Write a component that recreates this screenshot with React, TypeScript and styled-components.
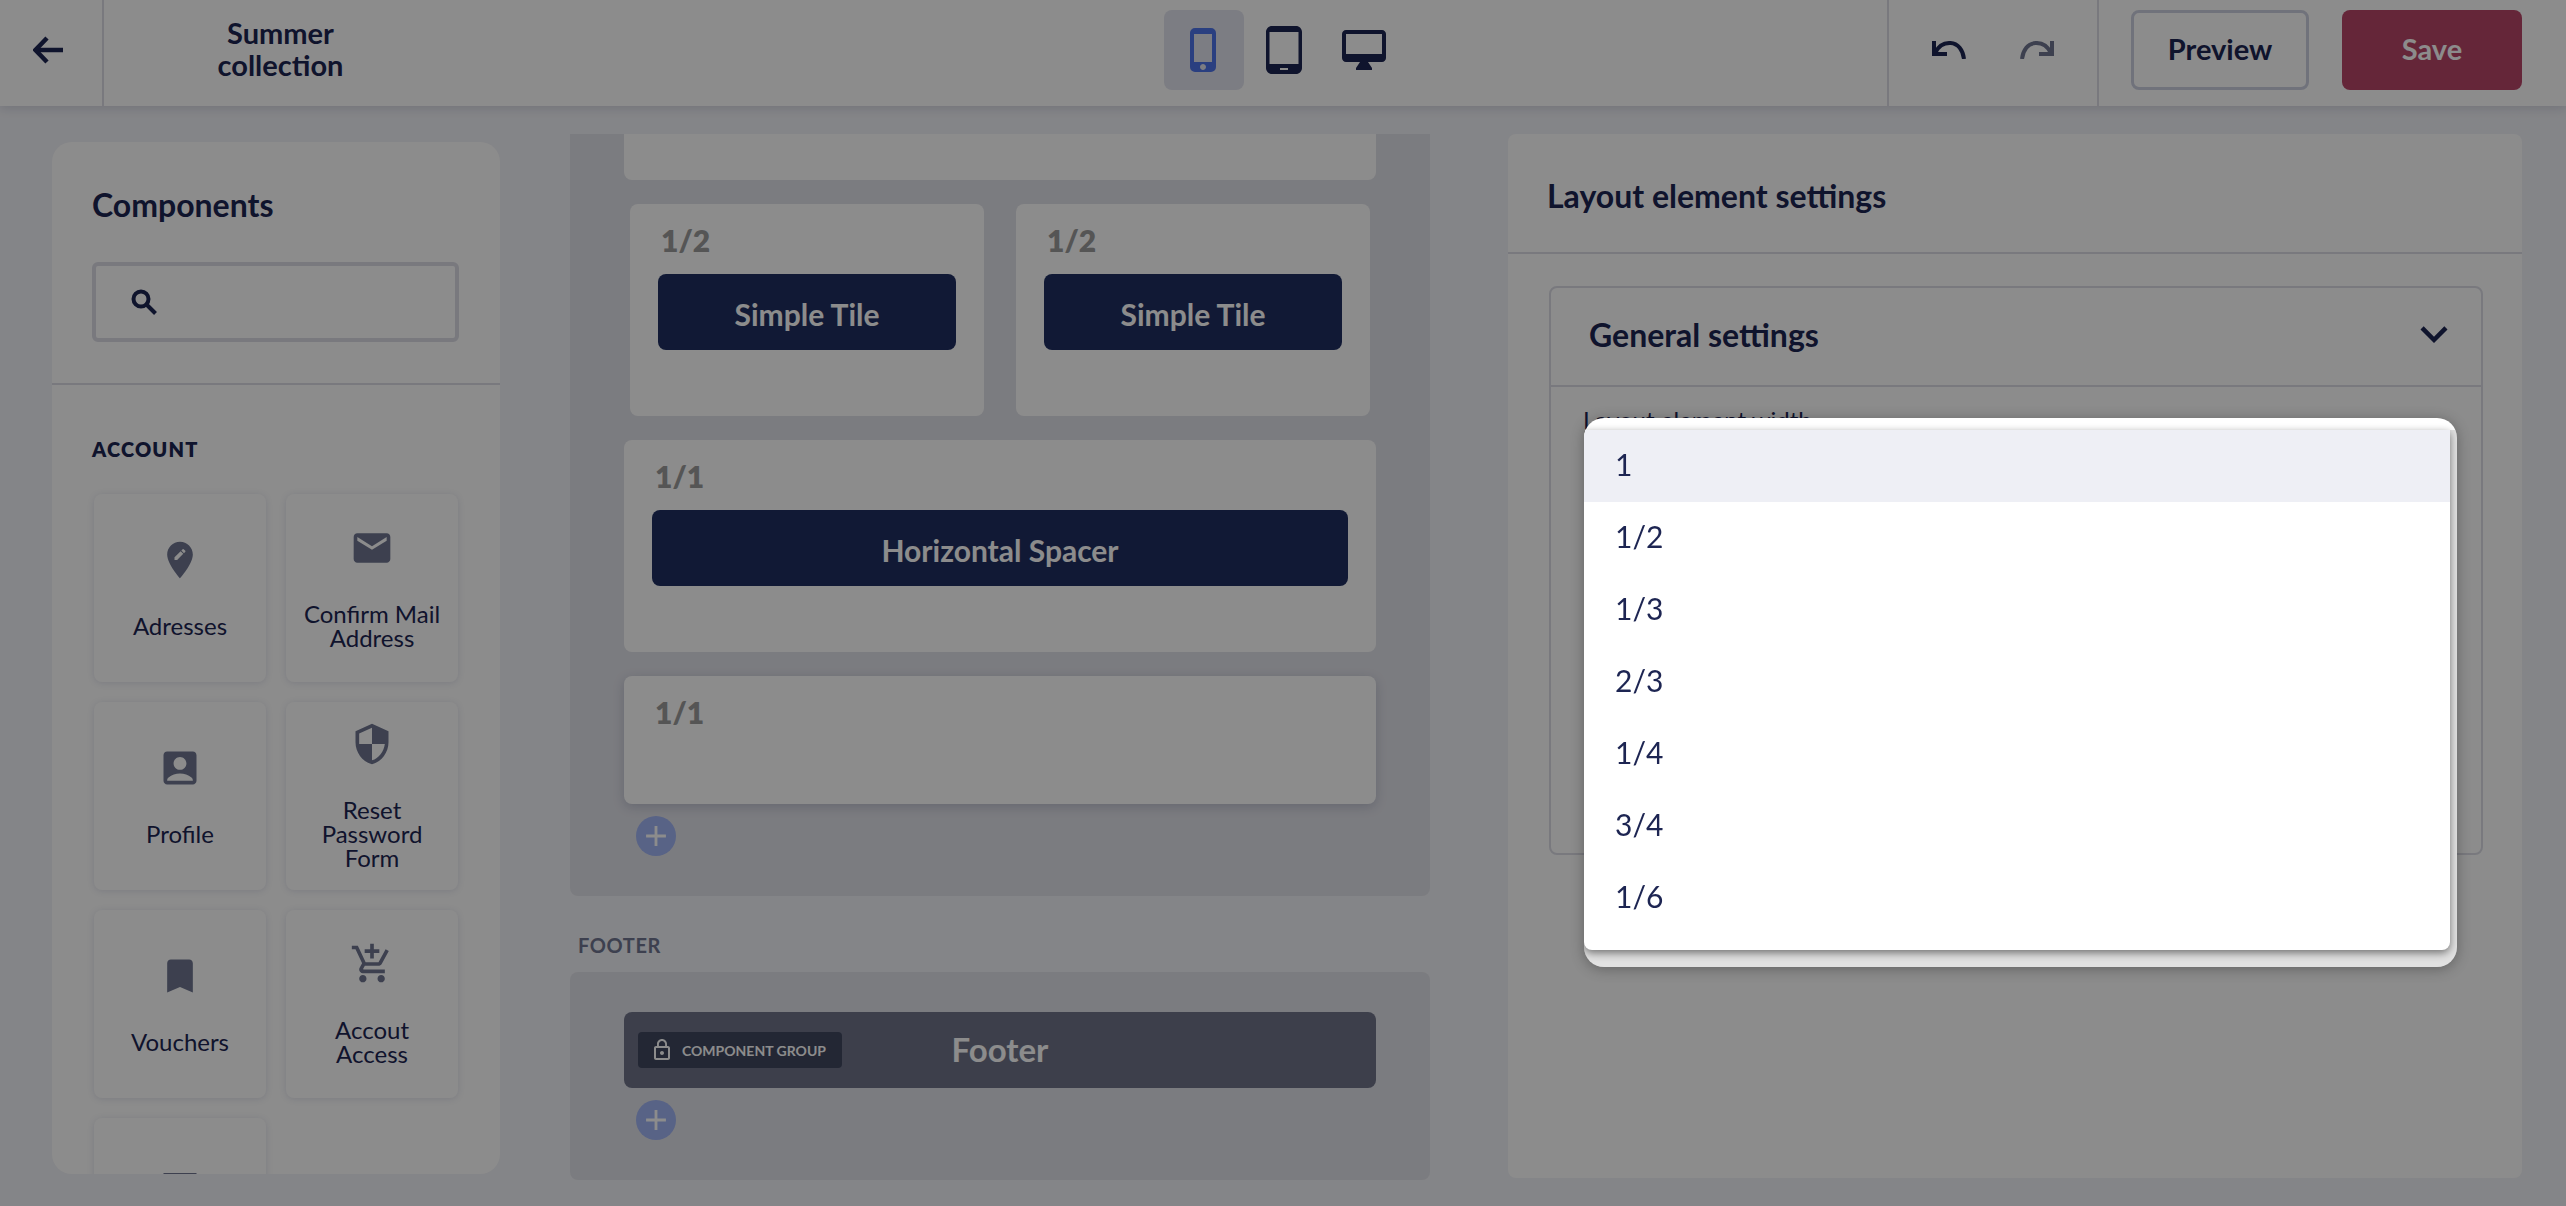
import styled, {createGlobalStyle} from "styled-components";
import {
  MdAccountBox,
  MdAdd,
  MdAddShoppingCart,
  MdBookmark,
  MdCalendarViewDay,
  MdEditLocation,
  MdEmail,
  MdKeyboardArrowDown,
  MdLockOutline,
  MdOutlineDesktopMac,
  MdPhoneIphone,
  MdSecurity,
  MdTabletAndroid,
} from "react-icons/md";

const navy = "#1d2552";
const line = "#dcdde6";

const GlobalStyle = createGlobalStyle`
  html, body {
    margin: 0;
    height: 100%;
    overflow: hidden;
    background: #f1f2f7;
  }

  * {
    box-sizing: border-box;
  }

  body {
    font-family: "Lato", "Open Sans", sans-serif;
    color: ${navy};
  }
`;

const Page = styled.div`
  height: 1206px;
  overflow: hidden;
`;

const Overlay = styled.div`
  position: fixed;
  inset: 0;
  z-index: 5;
  background: rgba(0, 0, 0, 0.45);
`;

const Header = styled.header`
  display: flex;
  height: 106px;
  background: #fff;
  box-shadow: 0 2px 10px rgba(30, 40, 90, 0.16);
`;

const BackCell = styled.div`
  display: flex;
  align-items: center;
  width: 104px;
  padding: 0 0 6px 33px;
  border-right: 2px solid ${line};
`;

const ProjectTitle = styled.div`
  display: flex;
  align-items: center;
  justify-content: center;
  width: 353px;
  padding-bottom: 9px;
  font-size: 29px;
  line-height: 32px;
  font-weight: 700;
  text-align: center;
`;

const Devices = styled.div`
  display: flex;
  height: 80px;
  margin: 10px 0 0 707px;
`;

const DeviceButton = styled.div<{$active?: boolean}>`
  display: flex;
  align-items: center;
  justify-content: center;
  width: 80px;
  height: 80px;
  border-radius: 8px;
  font-size: 48px;
  color: ${props => (props.$active ? "#4e73e9" : navy)};
  background: ${props => (props.$active ? "#e2e3ee" : "transparent")};
`;

const HistoryCell = styled.div`
  display: flex;
  align-items: center;
  gap: 54px;
  width: 212px;
  margin-left: auto;
  padding: 0 0 6px 43px;
  border-left: 2px solid ${line};
  border-right: 2px solid ${line};
`;

const HistoryIcon = styled.svg<{$redo?: boolean}>`
  width: 34px;
  height: 18px;
  fill: none;
  stroke: ${props => (props.$redo ? "#6f7691" : navy)};
  stroke-width: 4;
  transform: ${props => (props.$redo ? "scaleX(-1)" : "none")};
`;

const HeaderActions = styled.div`
  display: flex;
  gap: 33px;
  padding: 10px 44px 0 32px;
`;

const HeaderButton = styled.button<{$primary?: boolean}>`
  width: ${props => (props.$primary ? "180px" : "178px")};
  height: 80px;
  padding: 0 0 4px;
  border-radius: 8px;
  border: ${props => (props.$primary ? "none" : "3px solid #cdd0e0")};
  background: ${props => (props.$primary ? "#b94568" : "#fff")};
  color: ${props => (props.$primary ? "#fff" : navy)};
  font-family: inherit;
  font-size: 29px;
  font-weight: 700;
`;

const Body = styled.main`
  display: flex;
  align-items: flex-start;
  padding-left: 52px;
`;

const Sidebar = styled.aside`
  flex: none;
  width: 448px;
  height: 1032px;
  margin-top: 36px;
  overflow: hidden;
  border-radius: 20px;
  background: #fff;
`;

const SidebarTop = styled.div`
  padding: 43px 41px 41px 40px;
  border-bottom: 2px solid ${line};
`;

const SidebarTitle = styled.h2`
  margin: 0 0 37px;
  font-size: 32px;
  line-height: 40px;
  font-weight: 700;
`;

const SearchBox = styled.div`
  display: flex;
  align-items: center;
  height: 80px;
  padding-left: 35px;
  border: 4px solid ${line};
  border-radius: 6px;
`;

const SidebarList = styled.div`
  padding: 52px 42px 0 40px;
`;

const GroupLabel = styled.div`
  margin-bottom: 33px;
  font-size: 20px;
  line-height: 24px;
  font-weight: 800;
  letter-spacing: 1.2px;
`;

const TileGrid = styled.div`
  display: grid;
  grid-template-columns: 172px 172px;
  gap: 20px;
  margin-left: 2px;
`;

const Tile = styled.div`
  display: flex;
  flex-direction: column;
  align-items: center;
  justify-content: center;
  gap: 32px;
  height: 188px;
  padding: 0 14px;
  border-radius: 8px;
  background: #fff;
  box-shadow: 0 1px 7px rgba(40, 50, 110, 0.14);
`;

const TileIcon = styled.span`
  display: flex;
  font-size: 44px;
  color: #6f7691;
`;

const TileLabel = styled.div`
  font-size: 24px;
  line-height: 24px;
  text-align: center;
`;

const Canvas = styled.section`
  flex: none;
  width: 860px;
  margin: 28px 0 0 70px;
`;

const Dropzone = styled.div<{$footer?: boolean}>`
  padding: ${props => (props.$footer ? "40px 54px" : "0 54px 40px")};
  border-radius: ${props => (props.$footer ? "8px" : "0 0 8px 8px")};
  background: #e1e2e9;
`;

const StubCard = styled.div`
  height: 46px;
  margin-bottom: 24px;
  border-radius: 0 0 8px 8px;
  background: #fff;
`;

const CardRow = styled.div`
  display: flex;
  gap: 32px;
  margin: 0 6px 24px;
`;

const Card = styled.div<{$half?: boolean; $selected?: boolean}>`
  flex: 1;
  height: ${props => (props.$selected ? "128px" : "212px")};
  margin-bottom: ${props => (props.$half ? "0" : props.$selected ? "12px" : "24px")};
  padding: 19px 28px 0;
  border-radius: 8px;
  background: #fff;
  box-shadow: ${props => (props.$selected ? "0 3px 12px rgba(30, 40, 90, 0.2)" : "none")};
`;

const CardSize = styled.div`
  height: 34px;
  margin-bottom: 17px;
  padding-left: 3px;
  font-size: 30px;
  line-height: 34px;
  font-weight: 800;
  color: #9b9b9b;
`;

const ComponentBar = styled.div`
  display: flex;
  align-items: center;
  justify-content: center;
  height: 76px;
  padding-top: 3px;
  border-radius: 8px;
  background: #1f2f62;
  color: #fff;
  font-size: 30px;
  font-weight: 700;
`;

const AddButton = styled.div`
  display: flex;
  align-items: center;
  justify-content: center;
  width: 40px;
  height: 40px;
  margin-left: 12px;
  border-radius: 50%;
  background: #a0b4f4;
  color: #fff;
  font-size: 34px;
`;

const SectionName = styled.div`
  margin: 37px 0 15px;
  padding-left: 8px;
  font-size: 20px;
  line-height: 24px;
  font-weight: 700;
  letter-spacing: 0.6px;
  color: #6f7691;
`;

const FooterBar = styled.div`
  position: relative;
  display: flex;
  align-items: center;
  justify-content: center;
  height: 76px;
  margin-bottom: 12px;
  padding-bottom: 2px;
  border-radius: 8px;
  background: #6f7489;
  color: #fff;
  font-size: 33px;
  font-weight: 700;
`;

const LockBadge = styled.div`
  position: absolute;
  left: 14px;
  top: 20px;
  display: flex;
  align-items: center;
  gap: 8px;
  width: 204px;
  height: 36px;
  padding-left: 16px;
  border-radius: 4px;
  background: #40475f;
  font-size: 14px;
  font-weight: 700;
  svg {
    flex: none;
    font-size: 24px;
    margin-left: -4px;
  }
`;

const Settings = styled.aside`
  flex: none;
  width: 1014px;
  height: 1044px;
  margin: 28px 0 0 78px;
  border-radius: 8px;
  background: #fff;
`;

const SettingsTitle = styled.h2`
  display: flex;
  align-items: center;
  height: 120px;
  margin: 0;
  padding: 5px 0 0 39px;
  border-bottom: 2px solid ${line};
  font-size: 32px;
  font-weight: 700;
`;

const Accordion = styled.div`
  height: 569px;
  margin: 32px 39px 0 41px;
  border: 2px solid ${line};
  border-radius: 8px;
`;

const AccordionHead = styled.div`
  display: flex;
  align-items: center;
  justify-content: space-between;
  height: 99px;
  padding: 0 20px 5px 38px;
  border-bottom: 2px solid ${line};
  font-size: 32px;
  font-weight: 700;
  svg {
    font-size: 54px;
  }
`;

const AccordionBody = styled.div`
  position: relative;
  padding: 18px 32px;
  font-size: 24px;
  line-height: 30px;
`;

const Dropdown = styled.div`
  position: absolute;
  left: 33px;
  top: 31px;
  z-index: 10;
  width: 873px;
  height: 549px;
  padding-top: 12px;
  overflow: hidden;
  border-radius: 20px;
  background: linear-gradient(#fff 12px, #e2e2e2 12px);
  box-shadow: 0 2px 14px rgba(0, 0, 0, 0.3);
`;

const OptionList = styled.ul`
  width: 866px;
  height: 520px;
  margin: 0;
  padding: 0;
  list-style: none;
  border-radius: 0 0 8px 8px;
  background: #fff;
  box-shadow: 0 3px 9px rgba(0, 0, 0, 0.5);
`;

const Option = styled.li<{$active?: boolean}>`
  display: flex;
  align-items: center;
  height: 72px;
  padding: 0 0 5px 31px;
  font-size: 30px;
  color: ${navy};
  background: ${props => (props.$active ? "#eeeff5" : "transparent")};
`;

const tiles = [
  {id: "addresses", icon: <MdEditLocation />, label: "Adresses"},
  {id: "mail", icon: <MdEmail />, label: "Confirm Mail Address"},
  {id: "profile", icon: <MdAccountBox />, label: "Profile"},
  {id: "password", icon: <MdSecurity />, label: "Reset Password Form"},
  {id: "vouchers", icon: <MdBookmark />, label: "Vouchers"},
  {id: "access", icon: <MdAddShoppingCart />, label: "Accout Access"},
  {id: "more", icon: <MdCalendarViewDay />, label: ""},
];

const widths = ["1", "1/2", "1/3", "2/3", "1/4", "3/4", "1/6"];

function HistoryArrow({redo}: {redo?: boolean}) {
  return (
    <HistoryIcon $redo={redo} viewBox="0 0 34 18">
      <path d="M2 0V13H15" />
      <path d="M3.5 11.5C7 4 13 1.8 18.5 2C26 2.4 31 9 32 18" />
    </HistoryIcon>
  );
}

export default function App() {
  return (
    <Page>
      <GlobalStyle />
      <Overlay />
      <Header>
        <BackCell>
          <svg width="32" height="28" viewBox="0 0 32 28" fill="none" stroke={navy} strokeWidth="4.5">
            <path d="M30 14H5" />
            <path d="M14 2L2.5 14L14 26" />
          </svg>
        </BackCell>
        <ProjectTitle>
          Summer
          <br />
          collection
        </ProjectTitle>
        <Devices>
          <DeviceButton $active><MdPhoneIphone /></DeviceButton>
          <DeviceButton><MdTabletAndroid /></DeviceButton>
          <DeviceButton><MdOutlineDesktopMac /></DeviceButton>
        </Devices>
        <HistoryCell>
          <HistoryArrow />
          <HistoryArrow redo />
        </HistoryCell>
        <HeaderActions>
          <HeaderButton>Preview</HeaderButton>
          <HeaderButton $primary>Save</HeaderButton>
        </HeaderActions>
      </Header>
      <Body>
        <Sidebar>
          <SidebarTop>
            <SidebarTitle>Components</SidebarTitle>
            <SearchBox>
              <svg width="26" height="26" viewBox="0 0 26 26" fill="none" stroke={navy} strokeWidth="4">
                <circle cx="10" cy="10" r="7.5" />
                <path d="M15.5 15.5L24.5 24.5" />
              </svg>
            </SearchBox>
          </SidebarTop>
          <SidebarList>
            <GroupLabel>ACCOUNT</GroupLabel>
            <TileGrid>
              {tiles.map(tile => (
                <Tile key={tile.id}>
                  <TileIcon>{tile.icon}</TileIcon>
                  <TileLabel>{tile.label || "\u00a0"}</TileLabel>
                </Tile>
              ))}
            </TileGrid>
          </SidebarList>
        </Sidebar>
        <Canvas>
          <Dropzone>
            <StubCard />
            <CardRow>
              <Card $half>
                <CardSize>1/2</CardSize>
                <ComponentBar>Simple Tile</ComponentBar>
              </Card>
              <Card $half>
                <CardSize>1/2</CardSize>
                <ComponentBar>Simple Tile</ComponentBar>
              </Card>
            </CardRow>
            <Card>
              <CardSize>1/1</CardSize>
              <ComponentBar>Horizontal Spacer</ComponentBar>
            </Card>
            <Card $selected>
              <CardSize>1/1</CardSize>
            </Card>
            <AddButton><MdAdd /></AddButton>
          </Dropzone>
          <SectionName>FOOTER</SectionName>
          <Dropzone $footer>
            <FooterBar>
              <LockBadge>
                <MdLockOutline />
                COMPONENT GROUP
              </LockBadge>
              Footer
            </FooterBar>
            <AddButton><MdAdd /></AddButton>
          </Dropzone>
        </Canvas>
        <Settings>
          <SettingsTitle>Layout element settings</SettingsTitle>
          <Accordion>
            <AccordionHead>
              General settings
              <MdKeyboardArrowDown />
            </AccordionHead>
            <AccordionBody>
              Layout element width
              <Dropdown>
                <OptionList>
                  {widths.map((width, i) => (
                    <Option key={width} $active={i === 0}>{width}</Option>
                  ))}
                </OptionList>
              </Dropdown>
            </AccordionBody>
          </Accordion>
        </Settings>
      </Body>
    </Page>
  );
}
